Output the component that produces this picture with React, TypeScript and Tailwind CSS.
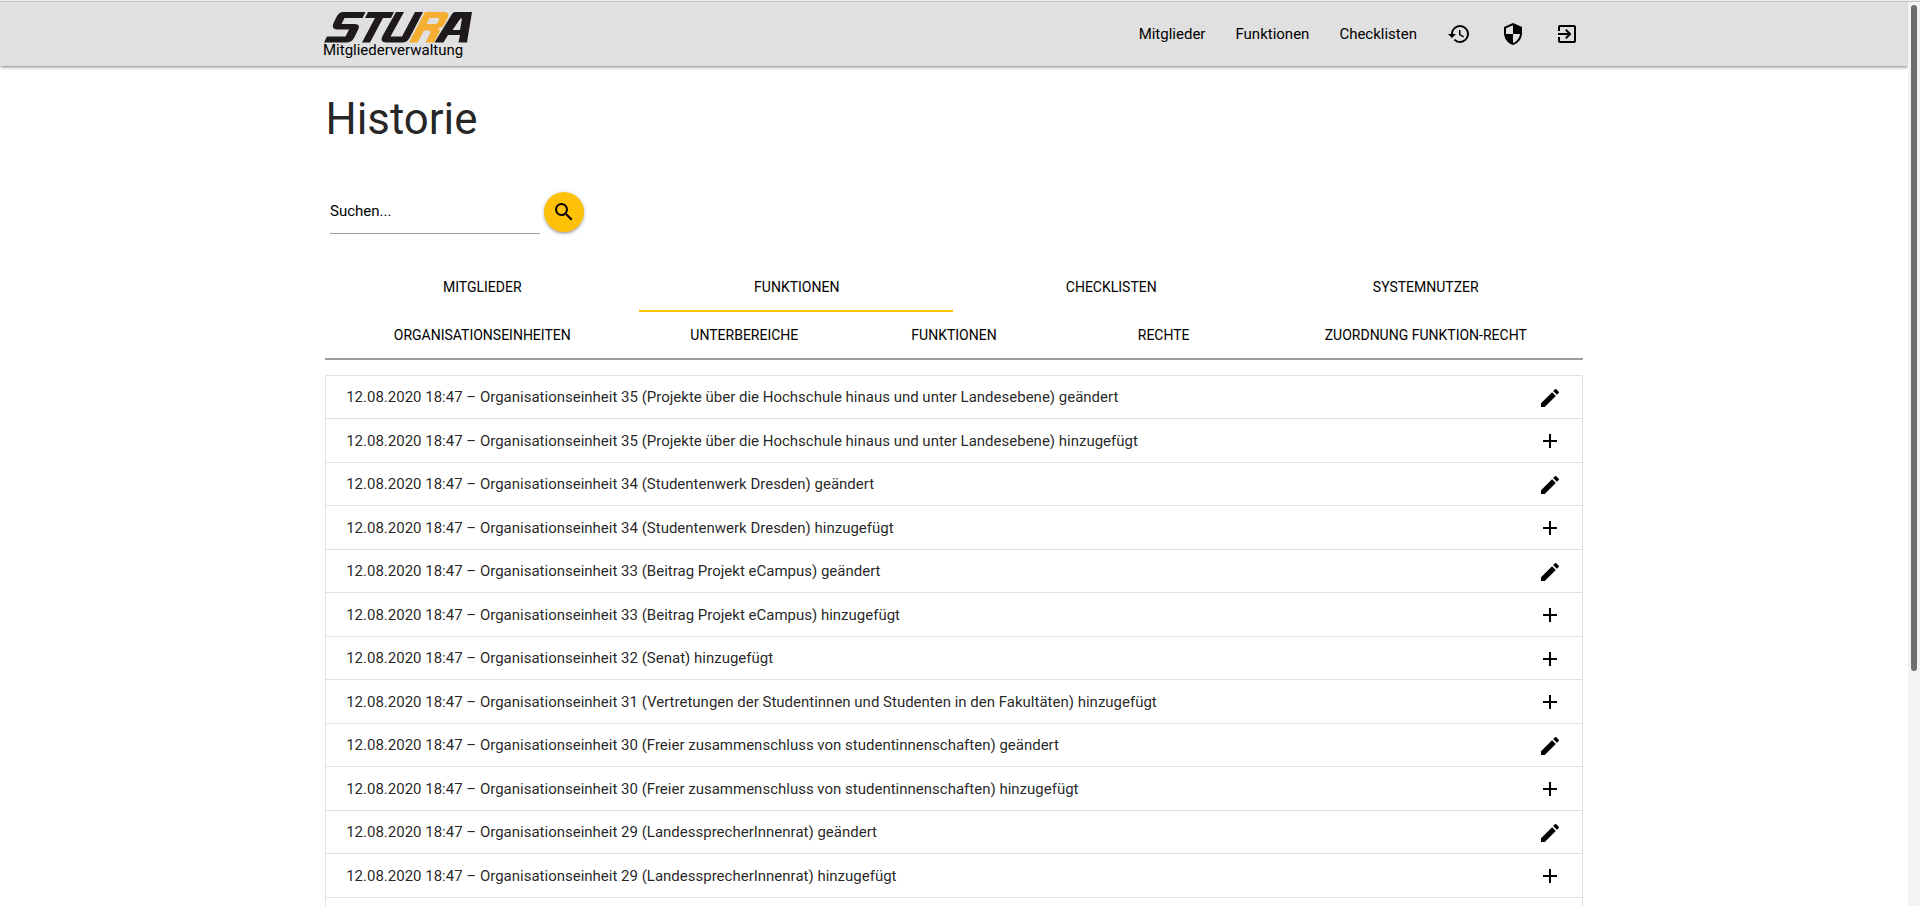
import { MdAdd, MdEdit, MdExitToApp, MdHistory, MdSearch, MdSecurity } from "react-icons/md";

type Entry = { unit: number; name: string; changed: boolean };

const entries: Entry[] = [
  { unit: 35, name: "Projekte über die Hochschule hinaus und unter Landesebene", changed: true },
  { unit: 35, name: "Projekte über die Hochschule hinaus und unter Landesebene", changed: false },
  { unit: 34, name: "Studentenwerk Dresden", changed: true },
  { unit: 34, name: "Studentenwerk Dresden", changed: false },
  { unit: 33, name: "Beitrag Projekt eCampus", changed: true },
  { unit: 33, name: "Beitrag Projekt eCampus", changed: false },
  { unit: 32, name: "Senat", changed: false },
  { unit: 31, name: "Vertretungen der Studentinnen und Studenten in den Fakultäten", changed: false },
  { unit: 30, name: "Freier zusammenschluss von studentinnenschaften", changed: true },
  { unit: 30, name: "Freier zusammenschluss von studentinnenschaften", changed: false },
  { unit: 29, name: "LandessprecherInnenrat", changed: true },
  { unit: 29, name: "LandessprecherInnenrat", changed: false },
];

const subTabs = [
  { label: "Organisationseinheiten", span: "col-span-3" },
  { label: "Unterbereiche", span: "col-span-2" },
  { label: "Funktionen", span: "col-span-2" },
  { label: "Rechte", span: "col-span-2" },
  { label: "Zuordnung Funktion-Recht", span: "col-span-3" },
];

function Logo() {
  return (
    <svg viewBox="0 0 148 31" className="ml-px block h-[31px] w-[148px]" role="img" aria-label="STURA">
      <g fill="#1d191c">
        <path d="M18 0H41.500L38.500 6H20.500L17.500 12H31Q37 12.500 34 18L30 26Q27.500 30.500 22 30.500H0L3 24.500H21.500L25 17.500H13Q7 17 9.500 11L13 4Q15 0.500 18 0Z" />
        <path d="M44 0H70L67 6H59L46 30.500H38L51 6H41Z" />
        <path d="M72 0H80L66.500 24.500H78L91 0H99L85.500 26Q83 30.500 78 30.500H62Q55.500 30 58.500 24Z" />
        <path d="M131 0H148L143 30.500H134.500L136 23H124L119.500 30.500H110.500L128 2Q129 0 131 0ZM136.500 6.500L128.500 18H136L138 6.500Z" fillRule="evenodd" />
      </g>
      <path fill="#f5ae31" fillRule="evenodd" d="M101 0H121Q126 1 124 5L120 13Q118 16 114 16.500Q117 18 115 21L110 30.500H101.500L106.500 20.500Q107 18.500 105 18.500H100L93.500 30.500H85ZM105.500 6L102.500 12H111.500Q113 12 114 10L115 8Q115.500 6 114 6Z" />
    </svg>
  );
}

export default function App() {
  return (
    <div className="flex h-[906px] flex-col overflow-hidden bg-white font-['Roboto',sans-serif] text-[15px] leading-[22.5px] text-black/87">
      <div className="h-[2px] shrink-0 border-b border-[#bcc8cd] bg-[#ededed]" />
      <div className="flex min-h-0 flex-1">
        <div className="min-w-0 flex-1 overflow-hidden">
          <header className="h-16 bg-[#e0e0e0] pl-[323px] pr-[314px] text-black shadow-[0_2px_2px_0_rgba(0,0,0,0.14),0_3px_1px_-2px_rgba(0,0,0,0.12),0_1px_5px_0_rgba(0,0,0,0.2)]">
            <div className="flex h-full justify-between">
              <div className="pt-[9.5px]">
                <Logo />
                <div className="-mt-[3.5px] h-[22px]">Mitgliederverwaltung</div>
              </div>
              <nav className="flex items-center">
                <a className="px-[15px]">Mitglieder</a>
                <a className="px-[15px]">Funktionen</a>
                <a className="px-[15px]">Checklisten</a>
                <a className="px-[15px]"><MdHistory size={24} /></a>
                <a className="px-[15px]"><MdSecurity size={24} /></a>
                <a className="px-[15px]"><MdExitToApp size={24} /></a>
              </nav>
            </div>
          </header>

          <main className="ml-[325px] w-[1258px]">
            <h1 className="pt-[30px] pl-[0.4px] text-[43.8px] leading-[47px] font-normal">Historie</h1>

            <div className="mt-[39px] flex items-start pl-[5px] text-black">
              <div className="h-[52px] w-[210px] border-b border-[#9e9e9e] pt-[18px]">Suchen...</div>
              <button className="mt-[10px] ml-1 flex size-10 items-center justify-center rounded-full bg-[#ffc107] shadow-[0_2px_2px_0_rgba(0,0,0,0.14),0_3px_1px_-2px_rgba(0,0,0,0.12),0_1px_5px_0_rgba(0,0,0,0.2)]">
                <MdSearch size={24} />
              </button>
            </div>

            <div className="mt-[30px] grid h-12 grid-cols-4 text-center text-[14px] leading-[46px] text-black uppercase">
              <a>Mitglieder</a>
              <a className="mr-px -ml-[0.6px] border-b-2 border-[#ffc107] pl-[1.6px]">Funktionen</a>
              <a>Checklisten</a>
              <a>Systemnutzer</a>
            </div>
            <div className="grid h-12 grid-cols-12 border-b-2 border-[#9e9e9e] text-center text-[14px] leading-[46px] text-black uppercase">
              {subTabs.map((t) => (
                <a key={t.label} className={t.span}>{t.label}</a>
              ))}
            </div>

            <ul className="mt-[14.5px] h-[560px] rounded-t-[2px] border border-b-0 border-[#e0e0e0]">
              {entries.map((e, i) => (
                <li key={i} className="group flex h-[43.5px] items-start justify-between border-b border-[#e0e0e0] pt-[10px] pr-5 pl-[20.2px]">
                  <span className="group-even:pt-[0.5px]">
                    12.08.2020 18:47 – Organisationseinheit {e.unit} ({e.name}) {e.changed ? "geändert" : "hinzugefügt"}
                  </span>
                  <span className="text-black group-odd:pt-[0.5px]">{e.changed ? <MdEdit size={24} /> : <MdAdd size={24} />}</span>
                </li>
              ))}
            </ul>
          </main>
        </div>
        <div className="w-3 shrink-0 bg-[#f3f3f3] pt-[3px] pl-[3px]">
          <div className="h-[666px] w-[6px] rounded-full bg-[#6e6e6e]" />
        </div>
      </div>
    </div>
  );
}
